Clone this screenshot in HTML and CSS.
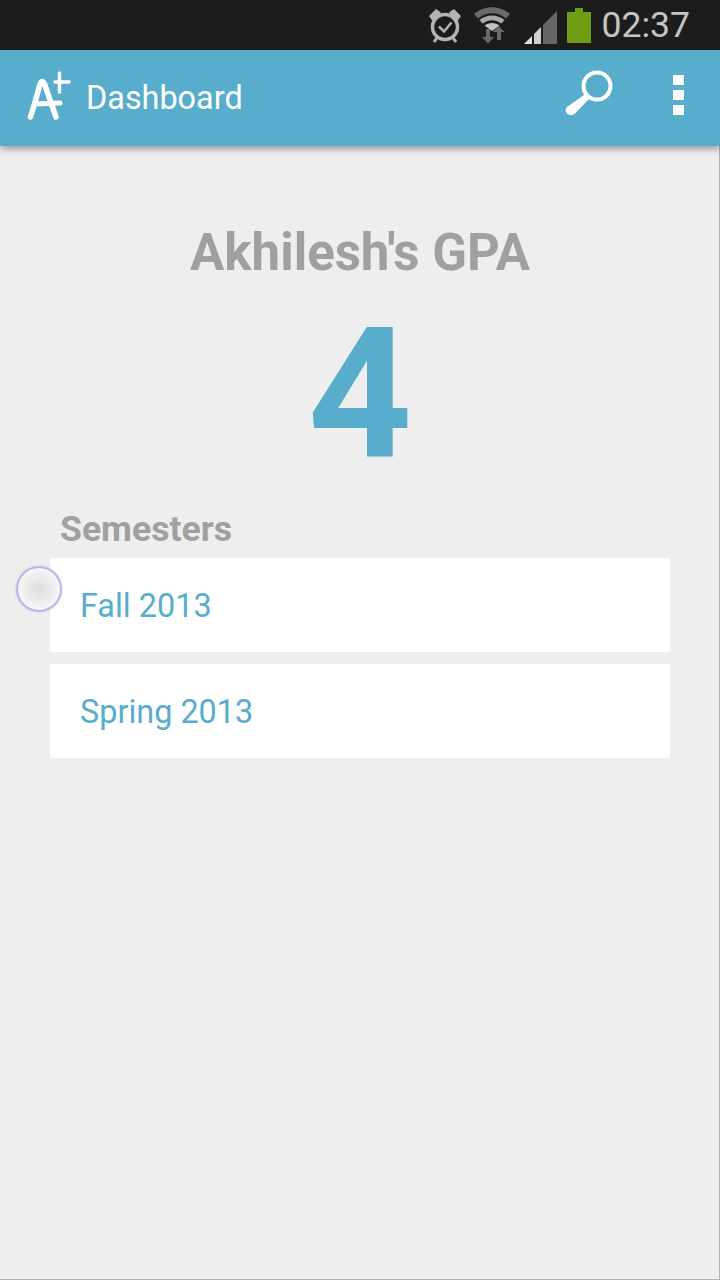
FILE: index.html
```html
<!DOCTYPE html>
<html>

    <head>
        <title>Dashboard</title>
        <link rel="stylesheet" href="styles.css">
    </head>

    <body>
        <div class="pantalla">
            <div class="barra-estado">
                <svg class="icono-alarma" width="34" height="36" viewBox="0 0 34 36">
                    <circle cx="17" cy="20" r="12.500" fill="none" stroke="#b4b4b4" stroke-width="3.500"/>
                    <path d="M11 19.500l5 5 7.500-9" fill="none" stroke="#b4b4b4" stroke-width="2.500"/>
                    <path d="M1 9l7-7 5 3.500-8.500 8.500zM33 9l-7-7-5 3.500 8.500 8.500z" fill="#b4b4b4"/>
                    <path d="M6 35l3.500-5M28 35l-3.500-5" stroke="#b4b4b4" stroke-width="3"/>
                </svg>
                <svg class="icono-wifi" width="36" height="38" viewBox="0 0 36 38">
                    <path d="M0 8C10-1 26-1 36 8l-4 4.500C24 5.500 12 5.500 4 12.500z" fill="#6a6a6a"/>
                    <path d="M5.500 14C13 8 23 8 30.500 14l-3 3.500C21 13 15 13 8.500 17.500z" fill="#a8a8a8"/>
                    <path d="M10.500 19.500C15 16 21 16 25.500 19.500L18 25z" fill="#c4c4c4"/>
                    <path d="M12 23v8H8l6 6.500 6-6.500h-4v-8z" fill="#6a6a6a"/>
                    <path d="M27 34v-8h3.500L24.500 20l-6 6H23v8z" fill="#6a6a6a"/>
                </svg>
                <svg class="icono-senal" width="33" height="34" viewBox="0 0 33 34">
                    <path d="M0 34l8-8v8z" fill="#e0e0e0"/>
                    <path d="M10 24l7-7v17h-7z" fill="#d0d0d0"/>
                    <path d="M19 15l14-14v33h-14z" fill="#666"/>
                </svg>
                <div class="bateria">
                    <div class="bateria-punta"></div>
                    <div class="bateria-cuerpo"></div>
                </div>
                <span class="hora">02:37</span>
            </div>

            <div class="barra-app">
                <svg class="logo" width="46" height="52" viewBox="0 0 46 52">
                    <path d="M4.500 47Q9 33 14 14Q16 9 18.500 14L30 47" fill="none" stroke="#fff" stroke-width="5.500" stroke-linecap="round" stroke-linejoin="round"/>
                    <path d="M9 34L34 33" fill="none" stroke="#fff" stroke-width="5" stroke-linecap="round"/>
                    <path d="M33.500 3V22M29 12H43" fill="none" stroke="#fff" stroke-width="3.500" stroke-linecap="round"/>
                </svg>
                <span class="titulo">Dashboard</span>
                <svg class="icono-buscar" width="52" height="50" viewBox="0 0 52 50">
                    <circle cx="33" cy="17" r="13.500" fill="none" stroke="#fff" stroke-width="4"/>
                    <path d="M22 24.500L26 29L11 44.500Q7 47.500 3.500 45Q0 41.500 3 38z" fill="#fff"/>
                </svg>
                <div class="menu-puntos">
                    <span></span>
                    <span></span>
                    <span></span>
                </div>
            </div>

            <div class="contenido">
                <h1 class="gpa-titulo">Akhilesh's GPA</h1>
                <div class="gpa-valor">4</div>
                <h2 class="semestres-titulo">Semesters</h2>
                <div class="semestres">
                    <div class="semestre">Fall 2013</div>
                    <div class="semestre">Spring 2013</div>
                </div>
            </div>

            <div class="toque"></div>
        </div>
    </body>

</html>
```

FILE: styles.css
```css
html,
body {
    width: 100%;
    height: 100%;
    margin: 0;
    padding: 0;
    overflow: hidden;
    background-color: #eee;
}

.pantalla {
    position: relative;
    width: 720px;
    height: 1280px;
    box-sizing: border-box;
    border-right: 1px solid #b0b0b0;
    border-bottom: 1px solid #b0b0b0;
    font-family: Roboto, sans-serif;
}

.barra-estado {
    height: 50px;
    margin-right: -1px;
    padding-right: 30px;
    background-color: #1c1c1c;
    display: flex;
    justify-content: flex-end;
    align-items: center;
}

.icono-alarma {
    margin: 0 12px 0 0;
}

.icono-wifi {
    margin: 0 14px 0 0;
}

.icono-senal {
    margin: 3px 10px 0 0;
}

.bateria {
    margin: 1px 10px 0 0;
    display: flex;
    flex-direction: column;
    align-items: center;
}

.bateria-punta {
    width: 8px;
    height: 4px;
    background-color: #6f9e15;
}

.bateria-cuerpo {
    width: 24px;
    height: 31px;
    background-color: #6f9e15;
}

.hora {
    font-size: 35.600px;
    color: #c4c4c4;
    line-height: 50px;
}

.barra-app {
    height: 96px;
    margin-right: -1px;
    padding: 0 36px 0 26px;
    background-color: #57adcb;
    box-shadow: 0 3px 7px rgba(0, 0, 0, 0.35);
    display: flex;
    align-items: center;
    position: relative;
}

.titulo {
    margin: 0 0 0 14px;
    flex-grow: 1;
    font-size: 32.400px;
    color: #fff;
}

.logo {
    margin-top: -4px;
}

.icono-buscar {
    margin-right: 57px;
    margin-top: -8px;
}

.menu-puntos {
    display: flex;
    flex-direction: column;
    gap: 5px;
    margin-top: -7px;
}

.menu-puntos span {
    display: block;
    width: 11px;
    height: 10px;
    background-color: #fff;
}

.contenido {
    padding: 0 49px 0 50px;
}

.gpa-titulo {
    margin: 77px 0 0;
    text-align: center;
    font-size: 51px;
    line-height: 60px;
    font-weight: 700;
    color: #a0a0a0;
}

.gpa-valor {
    margin-top: 16px;
    text-align: center;
    font-size: 182px;
    line-height: 190px;
    font-weight: 700;
    color: #57adcb;
}

.semestres-titulo {
    margin: 18px 0 7px 10px;
    font-size: 35.600px;
    line-height: 44px;
    font-weight: 700;
    color: #a0a0a0;
}

.semestres {
    display: flex;
    flex-direction: column;
    gap: 12px;
}

.semestre {
    height: 94px;
    padding-left: 30px;
    background-color: #fff;
    font-size: 32.400px;
    line-height: 96px;
    color: #57adcb;
}

/* indicador de toque sobre la lista */
.toque {
    position: absolute;
    left: 16px;
    top: 566px;
    width: 46px;
    height: 46px;
    box-sizing: border-box;
    border-radius: 50%;
    border: 2px solid #b4b8e6;
    background: radial-gradient(circle, #dcdcdc 0%, #efefef 50%, #fdfdfd 90%);
    box-shadow: 0 0 3px #c4c8ee;
}
```
